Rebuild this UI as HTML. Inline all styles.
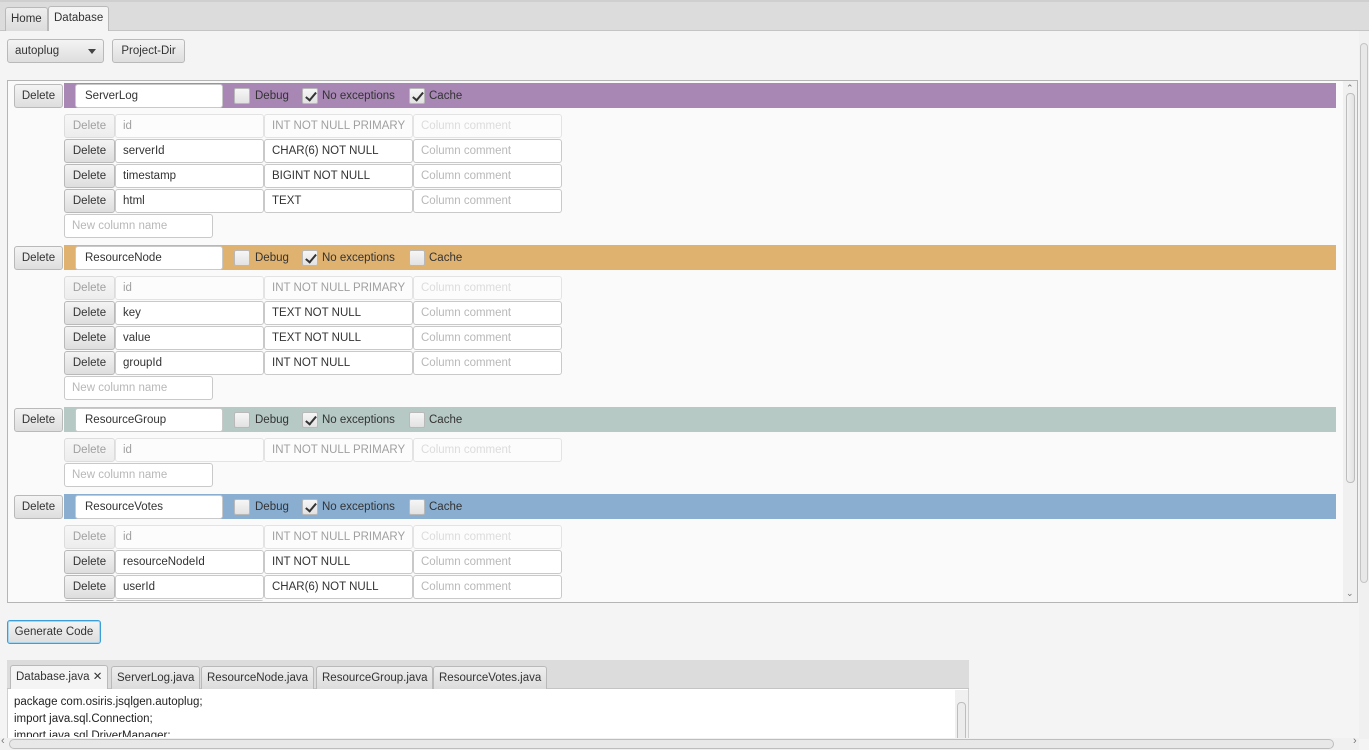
<!DOCTYPE html>
<html><head><meta charset="utf-8"><style>
*{box-sizing:border-box;margin:0;padding:0}
body{width:1369px;height:750px;overflow:hidden;background:#f4f4f4;font-family:"Liberation Sans",sans-serif;font-size:11.5px;color:#333;position:relative}
.a{position:absolute}
.btn{position:absolute;height:24px;border:1px solid #b9b9b9;border-radius:3px;background:linear-gradient(#f4f4f4,#dedede);line-height:22px;text-align:center;color:#333;white-space:nowrap}
.tf{position:absolute;height:24px;border:1px solid #c9c9c9;border-radius:3px;background:#fff;line-height:22px;padding-left:7px;color:#333;white-space:nowrap;overflow:hidden}
.ph{color:#b8b8b8}
.dis{opacity:.45}
.cb{position:absolute;width:16px;height:16px;border:1px solid #b9b9b9;border-radius:2px;background:linear-gradient(#f6f6f6,#e2e2e2)}
.cb.on::after{content:"";position:absolute;left:5px;top:1px;width:4px;height:9px;border:solid #333;border-width:0 2px 2px 0;transform:rotate(40deg)}
.lb{position:absolute;line-height:16px;color:#333}
.band{position:absolute;left:56px;width:1272px;height:25px}
.tab{position:absolute;border:1px solid #b9b9b9;border-bottom:none;border-radius:3px 3px 0 0;background:linear-gradient(#eee,#dcdcdc);line-height:22px;padding:0 5px;white-space:nowrap}
</style></head><body>
<div class="a" style="left:0;top:0;width:1369px;height:31px;background:#dcdcdc;border-top:2px solid #cfcfcf;border-bottom:1px solid #c4c4c4"></div>
<div class="tab" style="left:5px;top:7px;height:24px">Home</div>
<div class="tab" style="left:48px;top:6px;height:25px;background:#f4f4f4">Database</div>

<div class="btn" style="left:7px;top:39px;width:97px;text-align:left;padding-left:7px">autoplug<span class="a" style="left:80px;top:9px;width:0;height:0;border:4px solid transparent;border-top:5px solid #444"></span></div>
<div class="btn" style="left:112px;top:39px;width:73px">Project-Dir</div>

<div class="a" style="left:7px;top:80px;width:1351px;height:523px;border:1px solid #b5b5b5;background:#fafafa"></div>
<div class="a" style="left:8px;top:81px;width:1335px;height:520px;overflow:hidden">

<!-- T1 -->
<div class="band" style="top:2px;background:#a887b5"></div>
<div class="btn" style="left:6px;top:3px;width:49px">Delete</div>
<div class="tf" style="left:67px;top:3px;width:148px;padding-left:9px">ServerLog</div>
<div class="cb" style="left:226px;top:7px"></div><div class="lb" style="left:247px;top:7px">Debug</div>
<div class="cb on" style="left:294px;top:7px"></div><div class="lb" style="left:314px;top:7px">No exceptions</div>
<div class="cb on" style="left:401px;top:7px"></div><div class="lb" style="left:421px;top:7px">Cache</div>
<div class="dis"><div class="btn" style="left:56px;top:33px;width:51px">Delete</div><div class="tf" style="left:107px;top:33px;width:149px">id</div><div class="tf" style="left:256px;top:33px;width:149px">INT NOT NULL PRIMARY</div><div class="tf ph" style="left:405px;top:33px;width:149px">Column comment</div></div>
<div class="btn" style="left:56px;top:58px;width:51px">Delete</div><div class="tf" style="left:107px;top:58px;width:149px">serverId</div><div class="tf" style="left:256px;top:58px;width:149px">CHAR(6) NOT NULL</div><div class="tf ph" style="left:405px;top:58px;width:149px">Column comment</div>
<div class="btn" style="left:56px;top:83px;width:51px">Delete</div><div class="tf" style="left:107px;top:83px;width:149px">timestamp</div><div class="tf" style="left:256px;top:83px;width:149px">BIGINT NOT NULL</div><div class="tf ph" style="left:405px;top:83px;width:149px">Column comment</div>
<div class="btn" style="left:56px;top:108px;width:51px">Delete</div><div class="tf" style="left:107px;top:108px;width:149px">html</div><div class="tf" style="left:256px;top:108px;width:149px">TEXT</div><div class="tf ph" style="left:405px;top:108px;width:149px">Column comment</div>
<div class="tf ph" style="left:56px;top:133px;width:149px">New column name</div>

<!-- T2 -->
<div class="band" style="top:164px;background:#e0b270"></div>
<div class="btn" style="left:6px;top:165px;width:49px">Delete</div>
<div class="tf" style="left:67px;top:165px;width:148px;padding-left:9px">ResourceNode</div>
<div class="cb" style="left:226px;top:169px"></div><div class="lb" style="left:247px;top:169px">Debug</div>
<div class="cb on" style="left:294px;top:169px"></div><div class="lb" style="left:314px;top:169px">No exceptions</div>
<div class="cb" style="left:401px;top:169px"></div><div class="lb" style="left:421px;top:169px">Cache</div>
<div class="dis"><div class="btn" style="left:56px;top:195px;width:51px">Delete</div><div class="tf" style="left:107px;top:195px;width:149px">id</div><div class="tf" style="left:256px;top:195px;width:149px">INT NOT NULL PRIMARY</div><div class="tf ph" style="left:405px;top:195px;width:149px">Column comment</div></div>
<div class="btn" style="left:56px;top:220px;width:51px">Delete</div><div class="tf" style="left:107px;top:220px;width:149px">key</div><div class="tf" style="left:256px;top:220px;width:149px">TEXT NOT NULL</div><div class="tf ph" style="left:405px;top:220px;width:149px">Column comment</div>
<div class="btn" style="left:56px;top:245px;width:51px">Delete</div><div class="tf" style="left:107px;top:245px;width:149px">value</div><div class="tf" style="left:256px;top:245px;width:149px">TEXT NOT NULL</div><div class="tf ph" style="left:405px;top:245px;width:149px">Column comment</div>
<div class="btn" style="left:56px;top:270px;width:51px">Delete</div><div class="tf" style="left:107px;top:270px;width:149px">groupId</div><div class="tf" style="left:256px;top:270px;width:149px">INT NOT NULL</div><div class="tf ph" style="left:405px;top:270px;width:149px">Column comment</div>
<div class="tf ph" style="left:56px;top:295px;width:149px">New column name</div>

<!-- T3 -->
<div class="band" style="top:326px;background:#b6c9c5"></div>
<div class="btn" style="left:6px;top:327px;width:49px">Delete</div>
<div class="tf" style="left:67px;top:327px;width:148px;padding-left:9px">ResourceGroup</div>
<div class="cb" style="left:226px;top:331px"></div><div class="lb" style="left:247px;top:331px">Debug</div>
<div class="cb on" style="left:294px;top:331px"></div><div class="lb" style="left:314px;top:331px">No exceptions</div>
<div class="cb" style="left:401px;top:331px"></div><div class="lb" style="left:421px;top:331px">Cache</div>
<div class="dis"><div class="btn" style="left:56px;top:357px;width:51px">Delete</div><div class="tf" style="left:107px;top:357px;width:149px">id</div><div class="tf" style="left:256px;top:357px;width:149px">INT NOT NULL PRIMARY</div><div class="tf ph" style="left:405px;top:357px;width:149px">Column comment</div></div>
<div class="tf ph" style="left:56px;top:382px;width:149px">New column name</div>

<!-- T4 -->
<div class="band" style="top:413px;background:#8aaed0"></div>
<div class="btn" style="left:6px;top:414px;width:49px">Delete</div>
<div class="tf" style="left:67px;top:414px;width:148px;padding-left:9px">ResourceVotes</div>
<div class="cb" style="left:226px;top:418px"></div><div class="lb" style="left:247px;top:418px">Debug</div>
<div class="cb on" style="left:294px;top:418px"></div><div class="lb" style="left:314px;top:418px">No exceptions</div>
<div class="cb" style="left:401px;top:418px"></div><div class="lb" style="left:421px;top:418px">Cache</div>
<div class="dis"><div class="btn" style="left:56px;top:444px;width:51px">Delete</div><div class="tf" style="left:107px;top:444px;width:149px">id</div><div class="tf" style="left:256px;top:444px;width:149px">INT NOT NULL PRIMARY</div><div class="tf ph" style="left:405px;top:444px;width:149px">Column comment</div></div>
<div class="btn" style="left:56px;top:469px;width:51px">Delete</div><div class="tf" style="left:107px;top:469px;width:149px">resourceNodeId</div><div class="tf" style="left:256px;top:469px;width:149px">INT NOT NULL</div><div class="tf ph" style="left:405px;top:469px;width:149px">Column comment</div>
<div class="btn" style="left:56px;top:494px;width:51px">Delete</div><div class="tf" style="left:107px;top:494px;width:149px">userId</div><div class="tf" style="left:256px;top:494px;width:149px">CHAR(6) NOT NULL</div><div class="tf ph" style="left:405px;top:494px;width:149px">Column comment</div>
<div class="btn" style="left:56px;top:519px;width:51px">Delete</div><div class="tf" style="left:107px;top:519px;width:149px"></div>
</div>
<!-- inner vscroll -->
<div class="a" style="left:1343px;top:81px;width:14px;height:521px;background:#f0f0f0"></div>
<div class="a" style="left:1346px;top:93px;width:9px;height:390px;border:1px solid #bdbdbd;border-radius:4px;background:linear-gradient(90deg,#f2f2f2,#e2e2e2)"></div>
<div class="a" style="left:1346px;top:83px;font-size:9px;color:#777">&#8963;</div>
<div class="a" style="left:1346px;top:588px;font-size:9px;color:#777">&#8964;</div>

<div class="btn" style="left:7px;top:620px;width:94px;border:1px solid #3c9ed8;box-shadow:0 0 0 1px #a8d4ee inset">Generate Code</div>

<div class="a" style="left:7px;top:660px;width:962px;height:80px;background:#fff;border:1px solid #d0d0d0"></div>
<div class="a" style="left:7px;top:660px;width:962px;height:29px;background:#dcdcdc;border-bottom:1px solid #c4c4c4"></div>
<div class="tab" style="left:10px;top:665px;height:24px;background:#f4f4f4">Database.java ✕</div>
<div class="tab" style="left:111px;top:666px;height:23px">ServerLog.java</div>
<div class="tab" style="left:201px;top:666px;height:23px">ResourceNode.java</div>
<div class="tab" style="left:316px;top:666px;height:23px">ResourceGroup.java</div>
<div class="tab" style="left:433px;top:666px;height:23px">ResourceVotes.java</div>
<div class="a" style="left:14px;top:694px;line-height:17px;color:#222;height:43px;overflow:hidden">package com.osiris.jsqlgen.autoplug;<br>import java.sql.Connection;<br>import java.sql.DriverManager;</div>
<div class="a" style="left:955px;top:690px;width:13px;height:48px;background:#f0f0f0"></div>
<div class="a" style="left:957px;top:702px;width:9px;height:40px;border:1px solid #bdbdbd;border-radius:4px;background:#ececec"></div>

<!-- outer scrollbars -->
<div class="a" style="left:1359px;top:31px;width:10px;height:708px;background:#f0f0f0"></div>
<div class="a" style="left:1360px;top:43px;width:8px;height:540px;border:1px solid #c4c4c4;border-radius:4px;background:#e8e8e8"></div>
<div class="a" style="left:0;top:738px;width:1359px;height:12px;background:#f0f0f0"></div>
<div class="a" style="left:9px;top:739px;width:1325px;height:10px;border:1px solid #bdbdbd;border-radius:5px;background:#e8e8e8"></div>
<div class="a" style="left:1353px;top:735px;font-size:11px;color:#777">›</div>
<div class="a" style="left:1px;top:735px;font-size:11px;color:#777">‹</div>
</body></html>
